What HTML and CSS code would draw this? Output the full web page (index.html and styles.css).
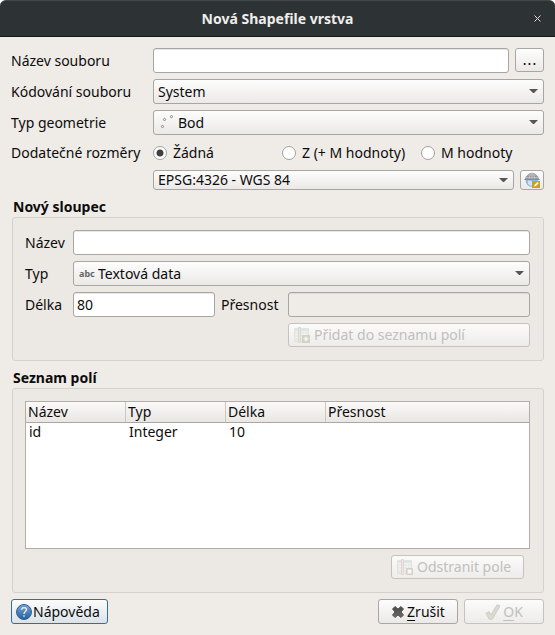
FILE: index.html
```html
<!DOCTYPE html>
<html lang="cs">
<head>
<meta charset="utf-8">
<title>Nová Shapefile vrstva</title>
<link rel="stylesheet" href="styles.css">
</head>
<body>
<svg width="0" height="0" class="defs" aria-hidden="true">
  <defs>
    <linearGradient id="help-blue" x1="0" y1="0" x2="0" y2="1"><stop offset="0" stop-color="#7ba6d8"/><stop offset="1" stop-color="#24609c"/></linearGradient>
    <linearGradient id="cross-grey" x1="0" y1="0" x2="0" y2="1"><stop offset="0" stop-color="#4a4a4a"/><stop offset="1" stop-color="#6c6c6a"/></linearGradient>
    <symbol id="arrow" viewBox="0 0 9 5"><path d="M0 0h9L7 2 5 4H4L2 2z" fill="#565656"/></symbol>
    <symbol id="columns" viewBox="0 0 16 16">
      <path d="M.5 1.500h14v13H.5z" fill="#e9eae8" stroke="#e2e3e0"/>
      <path d="M1 1h13v3H1z" fill="#dfe4e6"/>
      <path d="M1 4.500h13M1 7.500h13M1 10.500h13M10.500 4v10" stroke="#f1f1ef" fill="none"/>
    </symbol>
  </defs>
</svg>
<div class="dialog">
  <header class="titlebar">
    <h1>Nová Shapefile vrstva</h1>
    <button class="close" type="button" aria-label="Zavřít"><svg width="7" height="7" viewBox="0 0 7 7"><path d="M.5.5l6 6M6.500.5l-6 6" stroke="#dcdcd8"/></svg></button>
  </header>
  <form class="content">
    <div class="form">
      <label for="file">Název souboru</label>
      <div class="pair">
        <input class="field" id="file" type="text">
        <button class="btn browse" type="button">...</button>
      </div>

      <label for="encoding">Kódování souboru</label>
      <div class="combo">
        <select id="encoding"><option>System</option></select>
        <svg class="arrow"><use href="#arrow"/></svg>
      </div>

      <label for="geometry">Typ geometrie</label>
      <div class="combo with-icon">
        <select id="geometry"><option>Bod</option></select>
        <svg class="lead" width="16" height="16" viewBox="0 0 16 16" fill="#fff" stroke="#8a8a8a"><circle cx="3.500" cy="11.500" r="1.100"/><circle cx="5.500" cy="4.500" r="1.100"/><circle cx="12.500" cy="1.700" r="1.100"/></svg>
        <svg class="arrow"><use href="#arrow"/></svg>
      </div>

      <span id="dims">Dodatečné rozměry</span>
      <div class="radios" role="radiogroup" aria-labelledby="dims">
        <label><input type="radio" name="dim" checked>Žádná</label>
        <label><input type="radio" name="dim">Z (+ M hodnoty)</label>
        <label><input type="radio" name="dim">M hodnoty</label>
      </div>

      <div class="pair low">
        <div class="combo">
          <select aria-label="Souřadnicový systém"><option>EPSG:4326 - WGS 84</option></select>
          <svg class="arrow"><use href="#arrow"/></svg>
        </div>
        <button class="btn crs" type="button" aria-label="Vybrat souřadnicový systém">
          <svg width="16" height="16" viewBox="0 0 16 16">
            <path d="M1.500 8a6.500 7 0 0 0 13 0z" fill="#8fbce6"/>
            <path d="M4 8.500l4 .5v5l-2-.5-2-2z" fill="#cfe3f4"/>
            <path d="M.5 8l1.500-3.500L5 1.500 8 .7l3 .8 3 3L15.500 8z" fill="#93999f"/>
            <path d="M2 5.500h12M4 3h8M5 8Q5 3 8 .7M11 8Q11 3 8 .7M8 .7v7" fill="none" stroke="#c6cacd" stroke-width=".7"/>
            <path d="M.5 7.500h15" stroke="#868c92"/>
            <path d="M8 9h8v7H8z" fill="#c9a21c"/>
            <path d="M10 14.500l.5-1.800 3-2.700 1.300 1.300-3 2.700z" fill="#fffbe0"/>
          </svg>
        </button>
      </div>
    </div>

    <section aria-labelledby="new-column">
      <h2 id="new-column">Nový sloupec</h2>
      <div class="group column-form">
        <label for="name">Název</label>
        <input class="field wide" id="name" type="text">
        <label for="type">Typ</label>
        <div class="combo with-icon wide">
          <select id="type"><option>Textová data</option></select>
          <span class="lead abc" aria-hidden="true">abc</span>
          <svg class="arrow"><use href="#arrow"/></svg>
        </div>
        <label for="length">Délka</label>
        <input class="field" id="length" type="text" value="80">
        <label for="precision">Přesnost</label>
        <input class="field" id="precision" type="text" disabled>
        <button class="btn add" type="button" disabled>
          <svg width="16" height="16" viewBox="0 0 16 16"><use href="#columns"/><path d="M4.500.500h2v15h-2z" fill="#ebe8de" stroke="#dad7cc"/><path d="M8 8h8v8H8z" fill="#d3d1c6"/><path d="M12 9.500v5M9.500 12h5M10.500 10.500l3 3M13.500 10.500l-3 3" stroke="#fafaf6" stroke-width=".9"/></svg>
          Přidat do seznamu polí
        </button>
      </div>
    </section>

    <section class="grow" aria-labelledby="fields">
      <h2 id="fields">Seznam polí</h2>
      <div class="group list">
        <div class="table-box">
          <table>
            <thead><tr><th>Název</th><th>Typ</th><th>Délka</th><th class="last">Přesnost</th></tr></thead>
            <tbody><tr><td>id</td><td>Integer</td><td>10</td><td></td></tr></tbody>
          </table>
        </div>
        <button class="btn remove" type="button" disabled>
          <svg width="16" height="16" viewBox="0 0 16 16"><use href="#columns"/><path d="M4.500.500h2v15h-2z" fill="#eee3e1" stroke="#e3d8d6"/><path d="M9.500 9.500h6v6h-6z" fill="#e0d9d6" stroke="#d6d0cc"/><path d="M11 11l3 3M14 11l-3 3" stroke="#fff" stroke-width="1.300"/></svg>
          Odstranit pole
        </button>
      </div>
    </section>

    <footer>
      <button class="btn help" type="button">
        <svg width="16" height="16" viewBox="0 0 16 16"><circle cx="8" cy="8" r="7.500" fill="url(#help-blue)" stroke="#2c619b"/><path d="M5.600 5.800C5.600 2.800 10.600 2.900 10.500 5.800 10.400 7.500 8 7.700 8 9.900M8 11.200v1.600" fill="none" stroke="#e8f0f8" stroke-width="1.400"/></svg>
        Nápověda
      </button>
      <button class="btn action" type="button">
        <svg width="14" height="14" viewBox="0 0 14 14"><path d="M4 1.500l3 2.500 3-2.500 2.500 2.500L10 7l2.500 3-2.500 2.500-3-2.500-3 2.500L1.500 10 4 7 1.500 4z" fill="url(#cross-grey)" stroke="#555" stroke-linejoin="round"/></svg>
        <span><u>Z</u>rušit</span>
      </button>
      <button class="btn action" type="submit" disabled>
        <svg width="16" height="16" viewBox="0 0 16 16"><path d="M1 9.500l3-2 2 3.500L12 .8l3 1L7.500 15 4.500 15.500z" fill="#d9dbd3" stroke="#cccec6" stroke-linejoin="round"/></svg>
        <span><u>O</u>K</span>
      </button>
    </footer>
  </form>
</div>
</body>
</html>
```
FILE: styles.css
```css
* { box-sizing: border-box; }

body {
  margin: 0;
  background: #fff;
  color: #0c0c0c;
  font: 14px/20px "Noto Sans", "Open Sans", sans-serif;
}

.defs { position: absolute; }

.dialog {
  display: flex;
  flex-direction: column;
  min-height: 100vh;
  background: #efebe7;
  border-radius: 6px 6px 0 0;
}

.titlebar {
  display: grid;
  grid-template-columns: 36px 1fr 36px;
  align-items: center;
  height: 37px;
  background: #2d3234;
  border-top: 1px solid #42484a;
  border-bottom: 1px solid #15181a;
  border-radius: 6px 6px 0 0;
}

h1 {
  grid-column: 2;
  margin: 0;
  color: #eeeeec;
  font-size: 14px;
  font-weight: 700;
  line-height: 20px;
  text-align: center;
}

.close {
  display: grid;
  place-items: center;
  height: 24px;
  padding: 0;
  border: 0;
  background: none;
}

.content {
  display: flex;
  flex: 1;
  flex-direction: column;
  gap: 6px;
  padding: 11px;
}

.form {
  display: grid;
  grid-template-columns: 136px minmax(0, 1fr);
  gap: 6px;
  align-items: center;
}

.pair { display: flex; gap: 6px; }
.pair > :first-child { flex: 1; }
.low { grid-column: 2; }

input, select, button { font: inherit; color: inherit; }

.field {
  width: 100%;
  min-width: 0;
  height: 25px;
  padding: 0 3px;
  border: 1px solid #a9a5a2;
  border-radius: 3px;
  background: #fff;
  box-shadow: inset 0 1px #e8e7e6;
}

.field:disabled { background: #efebe7; box-shadow: inset 0 1px #dedad7; }

.combo { display: grid; align-items: center; min-width: 0; }
.combo > * { grid-area: 1 / 1; }

select {
  width: 100%;
  height: 25px;
  padding: 0 24px 0 4px;
  appearance: none;
  border: 1px solid #a9a5a2;
  border-radius: 3px;
  background: linear-gradient(#fdfdfd, #ebe9e7);
}

.low select { height: 20px; line-height: 18px; }
.with-icon select { padding-left: 24px; }

.arrow {
  justify-self: end;
  width: 9px;
  height: 5px;
  margin-right: 6px;
  pointer-events: none;
}

.lead { justify-self: start; margin-left: 6px; pointer-events: none; }
.abc { color: #666; font-size: 9px; font-weight: 700; line-height: 12px; }

.radios {
  display: grid;
  grid-template-columns: 129px 139px 1fr;
  align-items: center;
  height: 23px;
}

.radios label { display: flex; align-items: center; gap: 6px; white-space: nowrap; }

.radios input {
  width: 14px;
  height: 14px;
  margin: 0;
  appearance: none;
  border: 1px solid #a5a19e;
  border-radius: 50%;
  background: #fff;
}

.radios input:checked { background: radial-gradient(circle, #3f3f3f 3px, #fff 4px); }

.btn {
  display: flex;
  align-items: center;
  justify-content: center;
  height: 24px;
  padding: 0 5px;
  border: 1px solid #aaa6a3;
  border-radius: 3px;
  background: linear-gradient(#fdfdfd, #ebe9e7);
  white-space: nowrap;
}

.btn:disabled { border-color: #c5c2bf; color: #c1bfbd; background: linear-gradient(#fbfbfa, #eeecea); }

.browse { width: 29px; font: 15px/20px "DejaVu Sans", sans-serif; }
.crs { width: 24px; height: 20px; padding: 0; }

h2 {
  margin: 0;
  padding-left: 2px;
  font-size: 14px;
  font-weight: 700;
  line-height: 21px;
}

.group {
  margin-left: 1px;
  padding: 12px 13px 13px 12px;
  border: 1px solid #d5d1ce;
  border-radius: 3px;
  background: #ece8e4;
}

.column-form {
  display: grid;
  grid-template-columns: 42px minmax(0, 142fr) 61px minmax(0, 242fr);
  gap: 6px;
  align-items: center;
}

.wide { grid-column: 2 / -1; }
.add { grid-column: 4; justify-content: flex-start; gap: 4px; }

.grow { display: flex; flex: 1; flex-direction: column; }

.list { display: flex; flex: 1; flex-direction: column; gap: 6px; }

.table-box { flex: 1; border: 1px solid #b1adaa; background: #fff; }

table { width: 100%; table-layout: fixed; border-collapse: separate; border-spacing: 0; }

th {
  width: 100px;
  height: 21px;
  padding: 0 2px;
  border-right: 1px solid #c9c6c3;
  border-bottom: 1px solid #aaa7a4;
  background: linear-gradient(#fbfaf9, #e9e6e3);
  font-weight: 400;
  text-align: left;
}

.last { width: auto; border-right: 0; }
td { padding: 0 3px; line-height: 18px; }

.remove { align-self: flex-end; justify-content: flex-start; gap: 4px; min-width: 133px; margin-right: 6px; }

footer { display: flex; gap: 6px; }
footer .btn { height: 25px; }
.help { justify-content: flex-start; min-width: 97px; margin-right: auto; padding: 0 4px; gap: 1px; border-color: #336f9c; background: linear-gradient(#fbfcfc, #dde2e6); }
.action { width: 80px; gap: 2px; }

u { text-underline-offset: 3px; }
```
